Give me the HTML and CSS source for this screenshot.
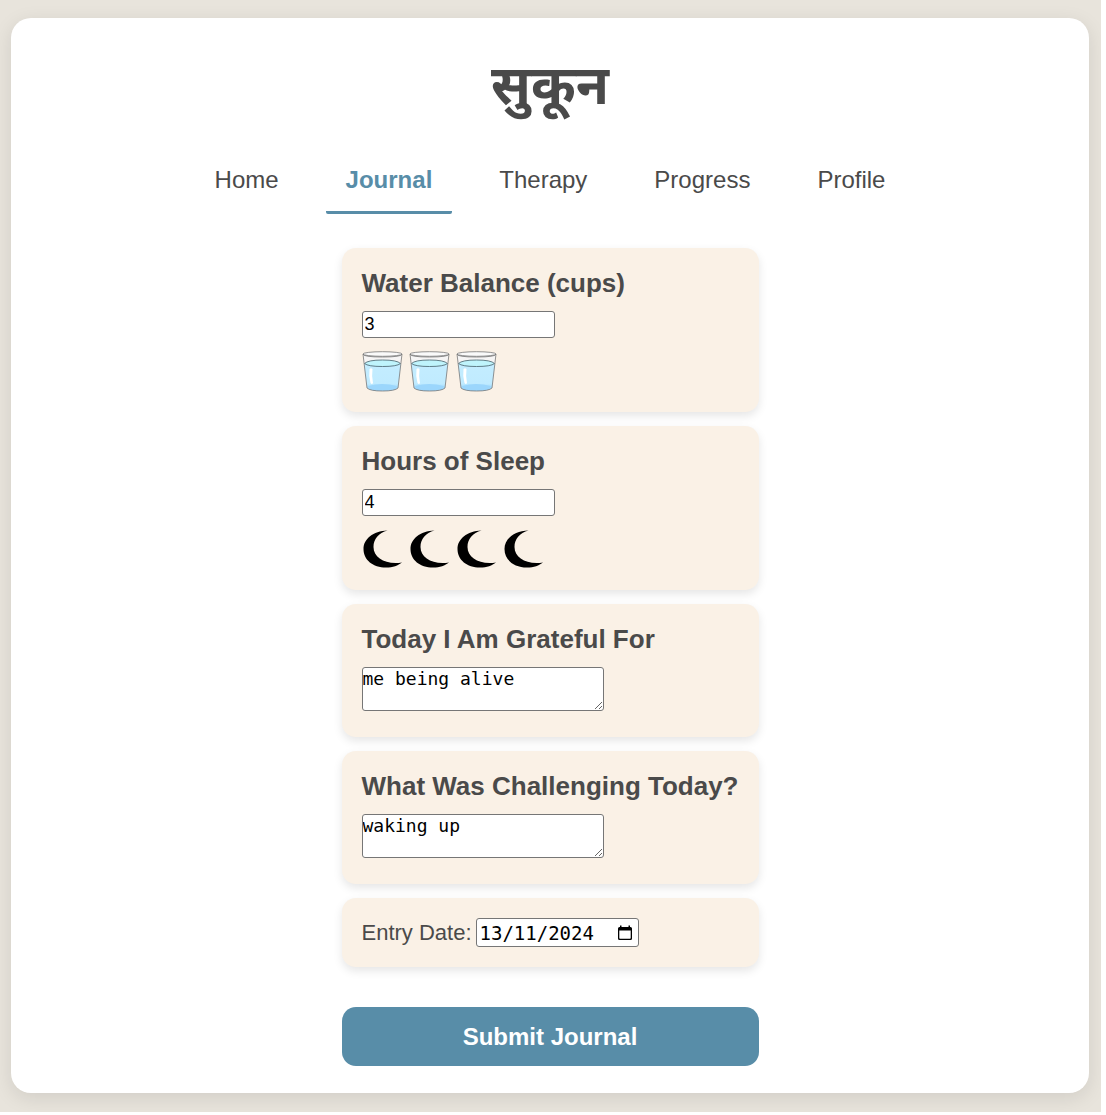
FILE: index.html
```html
<!DOCTYPE html>
<html lang="en">
<head>
<meta charset="utf-8">
<meta name="viewport" content="width=device-width, initial-scale=1">
<title>सुकून – Journal</title>
<link rel="stylesheet" href="styles.css">
</head>
<body>
<svg class="sprite" aria-hidden="true">
  <defs>
    <linearGradient id="water" x1="0" y1="0" x2="0" y2="1">
      <stop offset="0" stop-color="#c4edff"/>
      <stop offset="0.75" stop-color="#c0ebff"/>
      <stop offset="1" stop-color="#96d3fb"/>
    </linearGradient>
  </defs>
  <symbol id="cup" viewBox="0 0 41 41">
    <path d="M1 3 Q20 -1 40 3 L36 37 Q33 40 20.500 40 Q8 40 5 37 Z" fill="#f6f5f5"/>
    <path d="M2 13 Q20 6 39 13 L36 37 Q33 40 20.500 40 Q8 40 5 37 Z" fill="url(#water)"/>
    <path d="M6 35 Q20 31 35 35 L34 38 Q28 40 20.500 40 Q12 40 7 38 Z" fill="#9bd6fc"/>
    <path d="M2.500 12.500 Q6 9 20.500 9 Q35 9 38.500 12.500 Q35 15.500 20.500 15.500 Q6 15.500 2.500 12.500 Z" fill="#bff4fc" stroke="#55717a" stroke-width="0.900"/>
    <path d="M7.500 18 Q6.500 25 8.500 32 Q10 34 11 32 Q9.500 25 10.500 18 Q9 16.500 7.500 18 Z" fill="#fff"/>
    <ellipse cx="20.500" cy="3" rx="19.500" ry="2.300" fill="#fafafa" stroke="#777" stroke-width="0.800"/>
    <path d="M1 3 Q1 6 20.500 6 Q40 6 40 3 M1 3 L5 37 Q8 40 20.500 40 Q33 40 36 37 L40 3" fill="none" stroke="#777" stroke-width="0.800"/>
  </symbol>
  <symbol id="moon" viewBox="0 0 41 41">
    <path d="M25.500 1.500 C11 2 1.500 10 1.500 20 C1.500 31 11 38.500 24 38.500 C31 38.500 36 36.500 40 33.500 C24 36 11.500 29 11.500 18 C11.500 10 16.500 4 25.500 1.500 Z" fill="#000"/>
  </symbol>
</svg>
<div class="page">
  <main class="panel">
    <h1 class="brand">सुकून</h1>
    <nav class="nav">
      <a class="nav-link" href="#home">Home</a>
      <a class="nav-link active" href="#journal" aria-current="page">Journal</a>
      <a class="nav-link" href="#therapy">Therapy</a>
      <a class="nav-link" href="#progress">Progress</a>
      <a class="nav-link" href="#profile">Profile</a>
    </nav>
    <form class="journal">
      <section class="card">
        <h2 class="card-title"><label for="cups">Water Balance (cups)</label></h2>
        <input class="field number" id="cups" type="number" value="3">
        <div class="icons">
          <svg class="icon"><use href="#cup"/></svg>
          <svg class="icon"><use href="#cup"/></svg>
          <svg class="icon"><use href="#cup"/></svg>
        </div>
      </section>
      <section class="card">
        <h2 class="card-title"><label for="sleep">Hours of Sleep</label></h2>
        <input class="field number" id="sleep" type="number" value="4">
        <div class="icons">
          <svg class="icon"><use href="#moon"/></svg>
          <svg class="icon"><use href="#moon"/></svg>
          <svg class="icon"><use href="#moon"/></svg>
          <svg class="icon"><use href="#moon"/></svg>
        </div>
      </section>
      <section class="card">
        <h2 class="card-title"><label for="grateful">Today I Am Grateful For</label></h2>
        <textarea class="field note" id="grateful" rows="2">me being alive</textarea>
      </section>
      <section class="card">
        <h2 class="card-title"><label for="challenge">What Was Challenging Today?</label></h2>
        <textarea class="field note" id="challenge" rows="2">waking up</textarea>
      </section>
      <section class="card date-card">
        <label for="date">Entry Date:</label>
        <span class="field date-box">
          <input class="date-input" id="date" type="text" inputmode="numeric" value="13/11/2024">
          <button class="date-button" type="button" aria-label="Choose date">
            <svg class="calendar" viewBox="0 0 14 16"><path d="M0 3.500 Q0 2 1.500 2 H2 V0.500 H3.500 V2 H10.500 V0.500 H12 V2 H12.500 Q14 2 14 3.500 V13.500 Q14 15 12.500 15 H1.500 Q0 15 0 13.500 Z M1.300 5.500 V13 Q1.300 13.700 2 13.700 H12 Q12.700 13.700 12.700 13 V5.500 Z" fill="#000" fill-rule="evenodd"/></svg>
          </button>
        </span>
      </section>
      <button class="submit" type="submit">Submit Journal</button>
    </form>
  </main>
</div>
</body>
</html>
```
FILE: styles.css
```css
* {
  box-sizing: border-box;
}

body {
  margin: 0;
  padding: 0 5px 3px 0;
  background: #fff;
  color: #4a4a4a;
  font-family: "Liberation Sans", Arial, sans-serif;
  font-size: 22px;
}

.sprite {
  display: block;
  width: 0;
  height: 0;
}

.page {
  padding: 18px 12px 19px 11px;
  background: #e8e4dc;
  overflow: hidden;
}

.panel {
  display: flex;
  flex-direction: column;
  align-items: center;
  padding: 27px;
  border-radius: 20px;
  background: #fff;
  box-shadow: 0 5px 20px rgba(0, 0, 0, 0.1);
}

.brand {
  margin: 0 0 10px;
  font-family: "Noto Sans Devanagari", "Noto Sans", "Liberation Sans", sans-serif;
  font-size: 54px;
  line-height: 92px;
}

.nav {
  display: flex;
  justify-content: center;
  gap: 27px;
  margin-bottom: 34px;
}

.nav-link {
  padding: 19px 20px 17px;
  border-bottom: 3px solid transparent;
  border-radius: 2px;
  color: #4a4a4a;
  font-size: 24px;
  line-height: 28px;
  text-decoration: none;
}

.nav-link.active {
  border-bottom-color: #588da8;
  color: #588da8;
  font-weight: bold;
}

.journal {
  display: flex;
  flex-direction: column;
  gap: 14px;
}

.card {
  display: flex;
  flex-direction: column;
  align-items: flex-start;
  gap: 13px;
  padding: 20px;
  border-radius: 14px;
  background: #faf1e6;
  box-shadow: 0 4px 10px rgba(0, 0, 0, 0.1);
}

.card-title {
  margin: 0;
  font-size: 26px;
  line-height: 30px;
}

.field {
  border: 1px solid #767676;
  border-radius: 3px;
  background: #fff;
  color: #000;
}

.number {
  width: 193px;
  height: 27px;
  padding: 0 2px;
  font-family: inherit;
  font-size: 18px;
  appearance: textfield;
}

.number::-webkit-inner-spin-button {
  display: none;
}

.icons {
  display: flex;
  gap: 6px;
}

.icon {
  width: 41px;
  height: 41px;
}

.note {
  width: 242px;
  height: 44px;
  margin-bottom: 6px;
  padding: 0;
  font-family: "DejaVu Sans Mono", monospace;
  font-size: 18px;
  line-height: 22px;
}

.date-card {
  flex-direction: row;
  align-items: center;
  gap: 4px;
}

.date-box {
  display: flex;
  align-items: center;
  justify-content: space-between;
  width: 163px;
  height: 29px;
  padding: 0 6px 0 3px;
}

.date-input {
  width: 120px;
  padding: 0;
  border: 0;
  background: none;
  color: #000;
  font-family: "DejaVu Sans Mono", monospace;
  font-size: 19px;
}

.date-button {
  display: flex;
  padding: 0;
  border: 0;
  background: none;
}

.calendar {
  width: 14px;
  height: 16px;
}

.submit {
  margin-top: 26px;
  padding: 16px;
  border: 0;
  border-radius: 14px;
  background: #588da8;
  color: #fff;
  font-family: inherit;
  font-size: 24px;
  font-weight: bold;
  line-height: 27px;
}
```
